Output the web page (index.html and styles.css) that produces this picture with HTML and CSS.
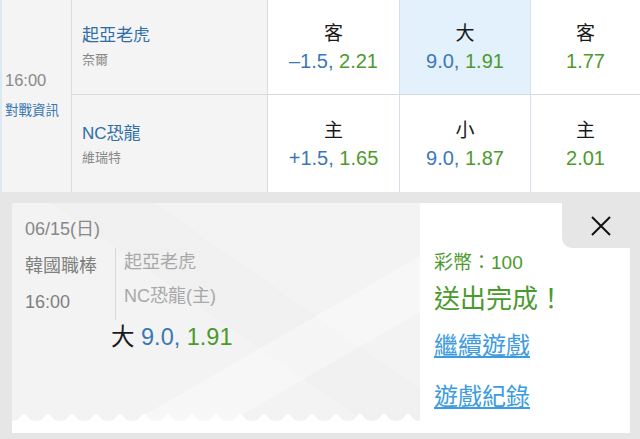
FILE: index.html
```html
<!DOCTYPE html>
<html lang="zh-Hant">
<head>
    <meta charset="UTF-8">
    <meta name="viewport" content="width=device-width, initial-scale=1.0">
    <title>下注完成</title>
    <link rel="stylesheet" href="styles.css">
</head>
<body>
    <div class="board">
        <div class="time-cell">
            <div class="time">16:00</div>
            <a class="info">對戰資訊</a>
        </div>
        <div class="team-cell">
            <div class="team">起亞老虎</div>
            <div class="pitcher">奈爾</div>
        </div>
        <div class="odds-cell">
            <div class="pick">客</div>
            <div class="line"><span class="num">–1.5,</span> <span class="rate">2.21</span></div>
        </div>
        <div class="odds-cell selected">
            <div class="pick">大</div>
            <div class="line"><span class="num">9.0,</span> <span class="rate">1.91</span></div>
        </div>
        <div class="odds-cell last">
            <div class="pick">客</div>
            <div class="line"><span class="rate">1.77</span></div>
        </div>

        <div class="team-cell bottom">
            <div class="team">NC恐龍</div>
            <div class="pitcher">維瑞特</div>
        </div>
        <div class="odds-cell bottom">
            <div class="pick">主</div>
            <div class="line"><span class="num">+1.5,</span> <span class="rate">1.65</span></div>
        </div>
        <div class="odds-cell bottom">
            <div class="pick">小</div>
            <div class="line"><span class="num">9.0,</span> <span class="rate">1.87</span></div>
        </div>
        <div class="odds-cell bottom last">
            <div class="pick">主</div>
            <div class="line"><span class="rate">2.01</span></div>
        </div>
    </div>

    <div class="sheet">
        <div class="card">
            <div class="ticket">
                <div class="date">06/15(日)</div>
                <div class="match">
                    <div class="league">
                        <div>韓國職棒</div>
                        <div>16:00</div>
                    </div>
                    <div class="teams">
                        <div>起亞老虎</div>
                        <div>NC恐龍(主)</div>
                    </div>
                </div>
                <div class="bet">大 <span class="num">9.0,</span> <span class="rate">1.91</span></div>
                <svg class="edge" width="408" height="26" viewBox="0 0 408 26" preserveAspectRatio="none">
                    <defs>
                        <pattern id="scallop" width="24" height="26" patternUnits="userSpaceOnUse">
                            <path d="M0 14 Q6 14 9 9 Q12 4 15 9 Q18 14 24 14 L24 26 L0 26 Z" fill="#fff"/>
                        </pattern>
                    </defs>
                    <rect width="408" height="26" fill="url(#scallop)"/>
                </svg>
            </div>
            <div class="done">
                <div class="coins">彩幣：100</div>
                <div class="ok">送出完成！</div>
                <a class="link">繼續遊戲</a>
                <a class="link">遊戲紀錄</a>
            </div>
        </div>
        <div class="close">
            <svg width="22" height="22" viewBox="0 0 22 22">
                <path d="M2 2 L20 20 M20 2 L2 20" stroke="#111" stroke-width="2" fill="none"/>
            </svg>
        </div>
    </div>
</body>
</html>
```

FILE: styles.css
```css
body {
    margin: 0;
    font-family: "Liberation Sans", "Noto Sans CJK TC", sans-serif;
    background: #e6e6e6;
    width: 640px;
    height: 439px;
    overflow: hidden;
}
a {
    cursor: pointer;
}

/* odds table */
.board {
    display: grid;
    grid-template-columns: 72px 196px 132px 131px 109px;
    grid-template-rows: 95px 97px;
    background: #fff;
}
.time-cell {
    grid-row: 1 / span 2;
    background: #f4f4f4;
    border-left: 2px solid #dce8f2;
    border-right: 1px solid #dcdcdc;
    display: flex;
    flex-direction: column;
    justify-content: center;
    padding: 0 0 2px 3px;
}
.time {
    font-size: 16.5px;
    color: #8a8a8a;
}
.info {
    margin-top: 9px;
    font-size: 13.5px;
    color: #3a78b5;
}
.team-cell {
    background: #f4f4f4;
    border-right: 1px solid #dcdcdc;
    border-bottom: 1px solid #d4dbe2;
    padding: 21px 0 0 10px;
}
.team-cell.bottom {
    border-bottom: none;
    padding-top: 24px;
}
.team {
    font-size: 17px;
    color: #2f6ea6;
}
.pitcher {
    margin-top: 3px;
    font-size: 13px;
    color: #888;
}
.odds-cell {
    border-right: 1px solid #d6e0ea;
    border-bottom: 1px solid #d4dbe2;
    text-align: center;
    padding-top: 18px;
}
.odds-cell.bottom {
    border-bottom: none;
    padding-top: 20px;
}
.odds-cell.last {
    border-right: none;
}
.odds-cell.selected {
    background: #e2f1fb;
}
.pick {
    font-size: 19px;
    color: #1a1a1a;
}
.line {
    margin-top: 5px;
    font-size: 20px;
}
.num {
    color: #3c78b6;
}
.rate {
    color: #4c9a2c;
}

/* result sheet */
.sheet {
    position: relative;
    padding: 11px 10px 0 12px;
}
.card {
    display: flex;
    height: 230px;
    background: #fff;
}
.ticket {
    position: relative;
    width: 408px;
    background:
        linear-gradient(150deg, transparent 62%, rgba(255,255,255,0.35) 62%, rgba(255,255,255,0.35) 74%, transparent 74%),
        linear-gradient(35deg, transparent 50%, rgba(238,238,238,0.5) 50%, rgba(238,238,238,0.5) 64%, transparent 64%),
        #f3f3f3;
    padding: 11px 0 0 13px;
    box-sizing: border-box;
    color: #888;
}
.date {
    font-size: 18px;
}
.match {
    display: flex;
    margin-top: 8px;
}
.league {
    font-size: 18px;
    line-height: 36px;
    color: #808080;
    padding-right: 18px;
    border-right: 1px solid #d8d8d8;
}
.teams {
    font-size: 18px;
    line-height: 34px;
    color: #a8a8a8;
    padding-left: 8px;
    margin-top: -3px;
}
.bet {
    margin: -2px 0 0 86px;
    font-size: 23.5px;
    color: #1a1a1a;
}
.edge {
    position: absolute;
    left: 0;
    bottom: 0;
    display: block;
}
.done {
    flex: 1;
    padding: 44px 0 0 14px;
    color: #4a9a2e;
}
.coins {
    font-size: 19px;
}
.ok {
    margin-top: 4px;
    font-size: 26px;
}
.link {
    display: block;
    margin-top: 11px;
    font-size: 24px;
    color: #3d9be0;
    text-decoration: underline;
}
.link + .link {
    margin-top: 16px;
}
.close {
    position: absolute;
    top: 0;
    right: 0;
    width: 78px;
    height: 56px;
    background: #e6e6e6;
    border-bottom-left-radius: 10px;
    display: flex;
    align-items: center;
    justify-content: center;
    padding-top: 12px;
    box-sizing: border-box;
}
```
